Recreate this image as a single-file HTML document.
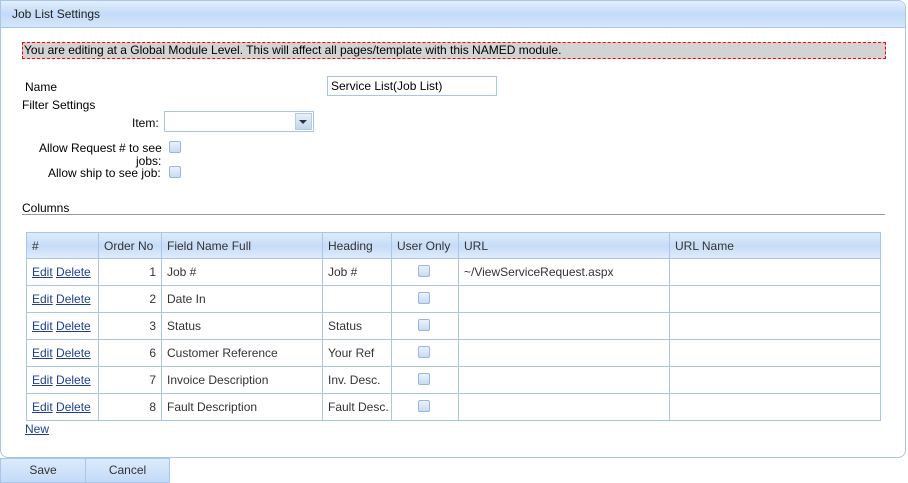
<!DOCTYPE html>
<html><head><style>
*{box-sizing:border-box;margin:0;padding:0}
body{width:908px;height:483px;background:#fff;font-family:"Liberation Sans",sans-serif;font-size:12px;color:#000;position:relative;overflow:hidden}
.a{position:absolute;white-space:nowrap}
.panel{position:absolute;left:0;top:0;width:906px;height:458px;border:1px solid #a9c5ea;border-radius:0 8px 8px 8px;background:#fff}
.hdr{position:absolute;left:0;top:0;width:904px;height:27px;border-bottom:1px solid #a9c5ea;background:linear-gradient(#e3eefc,#c3dbf7 50%,#d5e5fa);border-radius:0 8px 0 0}
.cb{position:absolute;width:12px;height:12px;border:1px solid #9ab6dc;border-radius:2px;background:linear-gradient(#eaf2fc,#c9dbf2)}
table{position:absolute;left:26px;top:232px;border-collapse:collapse;width:855px;table-layout:fixed}
td,th{border:1px solid #a9c5ea;height:27px;padding:0 5px;font-weight:normal;text-align:left;color:#333;white-space:nowrap;overflow:hidden}
th{height:26px;background:linear-gradient(#dcebfc,#c6dcf7 50%,#e0ecfb)}
td.n{text-align:right}
a{color:#1c3f94;text-decoration:underline}
.btn{position:absolute;top:458px;height:25px;border:1px solid #a9c5ea;background:linear-gradient(#dcebfc,#c3daf7);text-align:center;line-height:23px;color:#333}
</style></head><body>
<div class="panel"><div class="hdr"></div></div>
<div class="a" style="left:12px;top:7px;color:#222">Job List Settings</div>
<div class="a" style="left:22px;top:42px;width:864px;height:17px;background:#d3d3d3;border:1px dashed #f00;line-height:15px;padding-left:1px">You are editing at a Global Module Level. This will affect all pages/template with this NAMED module.</div>
<div class="a" style="left:25px;top:80px">Name</div>
<div class="a" style="left:327px;top:76px;width:170px;height:20px;border:1px solid #a9c5ea;padding-left:3px;line-height:18px">Service List(Job List)</div>
<div class="a" style="left:22px;top:98px">Filter Settings</div>
<div class="a" style="left:132px;top:116px">Item:</div>
<div class="a" style="left:164px;top:111px;width:150px;height:21px;border:1px solid #a9c5ea"></div>
<div class="a" style="left:295px;top:113px;width:17px;height:17px;background:linear-gradient(#e6effb,#c3d6ee);border:1px solid #b7cbe6"></div>
<div class="a" style="left:299px;top:120px;width:0;height:0;border-left:4px solid transparent;border-right:4px solid transparent;border-top:4px solid #333"></div>
<div class="a" style="left:39px;top:141px">Allow Request # to see</div>
<div class="a" style="left:136px;top:154px">jobs:</div>
<div class="cb" style="left:169px;top:141px"></div>
<div class="a" style="left:48px;top:166px">Allow ship to see job:</div>
<div class="cb" style="left:169px;top:166px"></div>
<div class="a" style="left:22px;top:201px">Columns</div>
<div class="a" style="left:22px;top:214px;width:863px;height:1px;background:#999"></div>
<table>
<colgroup><col style="width:72px"><col style="width:63px"><col style="width:161px"><col style="width:69px"><col style="width:67px"><col style="width:211px"><col></colgroup>
<tr><th>#</th><th>Order No</th><th>Field Name Full</th><th>Heading</th><th>User Only</th><th>URL</th><th>URL Name</th></tr>
<tr><td><a>Edit</a> <a>Delete</a></td><td class="n">1</td><td>Job #</td><td>Job #</td><td></td><td>~/ViewServiceRequest.aspx</td><td></td></tr>
<tr><td><a>Edit</a> <a>Delete</a></td><td class="n">2</td><td>Date In</td><td></td><td></td><td></td><td></td></tr>
<tr><td><a>Edit</a> <a>Delete</a></td><td class="n">3</td><td>Status</td><td>Status</td><td></td><td></td><td></td></tr>
<tr><td><a>Edit</a> <a>Delete</a></td><td class="n">6</td><td>Customer Reference</td><td>Your Ref</td><td></td><td></td><td></td></tr>
<tr><td><a>Edit</a> <a>Delete</a></td><td class="n">7</td><td>Invoice Description</td><td>Inv. Desc.</td><td></td><td></td><td></td></tr>
<tr><td><a>Edit</a> <a>Delete</a></td><td class="n">8</td><td>Fault Description</td><td style="padding:0 3px 0 5px">Fault Desc.</td><td></td><td></td><td></td></tr>
</table>
<div class="cb" style="left:418px;top:265px"></div>
<div class="cb" style="left:418px;top:292px"></div>
<div class="cb" style="left:418px;top:319px"></div>
<div class="cb" style="left:418px;top:346px"></div>
<div class="cb" style="left:418px;top:373px"></div>
<div class="cb" style="left:418px;top:400px"></div>
<div class="a" style="left:25px;top:422px"><a>New</a></div>
<div class="btn" style="left:0;width:86px">Save</div>
<div class="btn" style="left:85px;width:85px">Cancel</div>
</body></html>
